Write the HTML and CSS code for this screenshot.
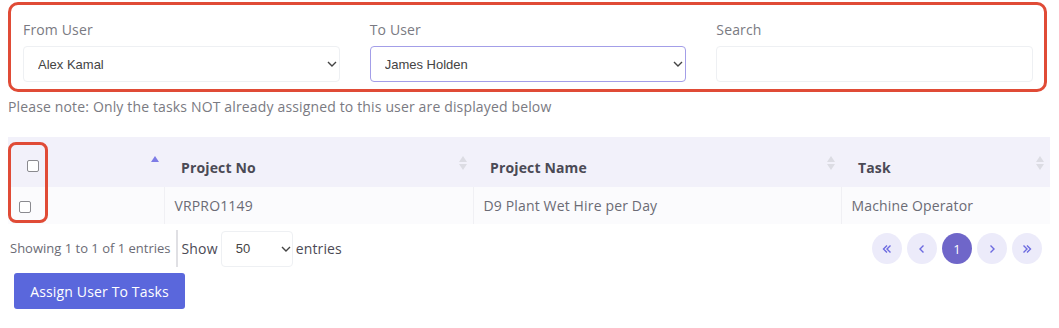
FILE: index.html
```html
<!DOCTYPE html>
<html>
<head>
<meta charset="utf-8">
<link rel="stylesheet" href="styles.css">
</head>
<body>
<div class="filters">
  <div class="field">
    <label class="lbl">From User</label>
    <div class="sel-wrap">
      <select class="sel"><option>Alex Kamal</option></select>
      <svg class="chev" width="10" height="6" viewBox="0 0 10 6"><polyline points="1,1 5,5 9,1" fill="none" stroke="#444" stroke-width="1.4"/></svg>
    </div>
  </div>
  <div class="field">
    <label class="lbl">To User</label>
    <div class="sel-wrap">
      <select class="sel focus"><option>James Holden</option></select>
      <svg class="chev" width="10" height="6" viewBox="0 0 10 6"><polyline points="1,1 5,5 9,1" fill="none" stroke="#444" stroke-width="1.4"/></svg>
    </div>
  </div>
  <div class="field">
    <label class="lbl">Search</label>
    <input class="inp" type="text">
  </div>
</div>
<p class="note">Please note: Only the tasks NOT already assigned to this user are displayed below</p>

<div class="table-wrap">
  <table class="tbl">
    <colgroup><col class="c1"><col class="c2"><col class="c3"><col class="c4"></colgroup>
    <thead>
      <tr>
        <th class="chk-h"><span class="cb"></span>
          <svg class="sort sort-up" width="8" height="6" viewBox="0 0 8 6"><polygon points="4,0 8,6 0,6" fill="#7e7ce6"/></svg>
        </th>
        <th>Project No
          <svg class="sort" width="8" height="14" viewBox="0 0 8 14"><polygon points="4,0 8,6 0,6" fill="#dcdce3"/><polygon points="0,8 8,8 4,14" fill="#dcdce3"/></svg>
        </th>
        <th>Project Name
          <svg class="sort" width="8" height="14" viewBox="0 0 8 14"><polygon points="4,0 8,6 0,6" fill="#dcdce3"/><polygon points="0,8 8,8 4,14" fill="#dcdce3"/></svg>
        </th>
        <th>Task
          <svg class="sort" width="8" height="14" viewBox="0 0 8 14"><polygon points="4,0 8,6 0,6" fill="#dcdce3"/><polygon points="0,8 8,8 4,14" fill="#dcdce3"/></svg>
        </th>
      </tr>
    </thead>
    <tbody>
      <tr>
        <td class="chk-d"><span class="cb"></span></td>
        <td>VRPRO1149</td>
        <td>D9 Plant Wet Hire per Day</td>
        <td>Machine Operator</td>
      </tr>
    </tbody>
  </table>
  <div class="mark"></div>
</div>

<div class="footer">
  <div class="info">Showing 1 to 1 of 1 entries</div>
  <div class="length">
    <span>Show</span>
    <div class="sel-wrap small">
      <select class="sel sel-sm"><option>50</option></select>
      <svg class="chev" width="10" height="6" viewBox="0 0 10 6"><polyline points="1,1 5,5 9,1" fill="none" stroke="#444" stroke-width="1.4"/></svg>
    </div>
    <span>entries</span>
  </div>
  <div class="pager">
    <span class="pg"><svg width="10" height="10" viewBox="0 0 10 10"><polyline points="5,1.5 1.5,5 5,8.5" fill="none" stroke="#6c6ae0" stroke-width="1.4"/><polyline points="8.5,1.5 5,5 8.5,8.5" fill="none" stroke="#6c6ae0" stroke-width="1.4"/></svg></span>
    <span class="pg"><svg width="10" height="10" viewBox="0 0 10 10"><polyline points="6.5,1.5 3,5 6.5,8.5" fill="none" stroke="#6c6ae0" stroke-width="1.4"/></svg></span>
    <span class="pg active">1</span>
    <span class="pg"><svg width="10" height="10" viewBox="0 0 10 10"><polyline points="3.5,1.5 7,5 3.5,8.5" fill="none" stroke="#6c6ae0" stroke-width="1.4"/></svg></span>
    <span class="pg"><svg width="10" height="10" viewBox="0 0 10 10"><polyline points="1.5,1.5 5,5 1.5,8.5" fill="none" stroke="#6c6ae0" stroke-width="1.4"/><polyline points="5,1.5 8.5,5 5,8.5" fill="none" stroke="#6c6ae0" stroke-width="1.4"/></svg></span>
  </div>
</div>

<button class="btn">Assign User To Tasks</button>
</body>
</html>
```

FILE: styles.css
```css
* { box-sizing: border-box; }
body {
  margin: 2px 8px 8px 8px;
  font-family: "Open Sans", "DejaVu Sans", sans-serif;
  letter-spacing: 0.15px;
  background: #fff;
  color: #6b6b75;
}
.filters {
  width: 1039px;
  border: 3px solid #e04b36;
  border-radius: 10px;
  padding: 15px 11px 7px 12px;
  display: grid;
  grid-template-columns: 1fr 1fr 1fr;
  column-gap: 30px;
}
.field { display: flex; flex-direction: column; }
.lbl {
  font-size: 14px;
  line-height: 20px;
  color: #7a7a82;
  margin-bottom: 6px;
}
.sel-wrap { position: relative; }
.sel {
  appearance: none;
  -webkit-appearance: none;
  width: 100%;
  height: 36px;
  border: 1px solid #eef0f3;
  border-radius: 4px;
  background: #fff;
  font-family: "Liberation Sans", Arial, sans-serif;
  font-size: 13px;
  letter-spacing: 0;
  color: #444;
  padding: 0 14px;
  outline: none;
}
.sel.focus { border-color: #a39ee8; }
.chev { position: absolute; right: 3px; top: 15px; pointer-events: none; }
.inp {
  height: 36px;
  border: 1px solid #eef0f3;
  border-radius: 4px;
  outline: none;
}
.note {
  margin: 5px 0 0 0;
  font-size: 14px;
  line-height: 20px;
  color: #7a7a82;
}
.table-wrap { position: relative; margin-top: 20px; width: 1042px; }
.tbl {
  width: 1042px;
  border-collapse: collapse;
  table-layout: fixed;
}
.c1 { width: 156px; }
.c2 { width: 309px; }
.c3 { width: 368px; }
.c4 { width: 209px; }
.tbl th {
  background: #f2f1fa;
  height: 50px;
  padding: 10px 20px 0 17px;
  text-align: left;
  font-size: 14px;
  font-weight: 700;
  color: #4b4a55;
  position: relative;
}
.tbl td {
  background: #fbfbfd;
  height: 37px;
  padding: 0 10px;
  font-size: 14px;
  color: #6b6b75;
  border-left: 1px solid #f0f0f4;
}
.tbl td:first-child { border-left: none; }
.sort { position: absolute; right: 6px; top: 19px; }
.sort-up { top: 19px; right: 5px; }
.cb {
  display: inline-block;
  width: 12px;
  height: 12px;
  border: 1px solid #8a8a8f;
  border-radius: 2px;
  background: #fff;
  vertical-align: middle;
}
.chk-h { padding-left: 19px !important; }
.chk-h .cb { margin-top: -6px; }
.chk-d { padding-left: 11px !important; }
.mark {
  position: absolute;
  left: 0;
  top: 5px;
  width: 40px;
  height: 81px;
  border: 3px solid #e04b36;
  border-radius: 8px;
}
.footer {
  display: flex;
  align-items: center;
  margin-top: 6px;
  width: 1042px;
}
.info {
  font-size: 13px;
  letter-spacing: 0;
  color: #6b6b75;
  padding: 0 5px 0 2px;
  line-height: 37px;
  border-right: 2px solid #e0e0e4;
}
.length {
  display: flex;
  align-items: center;
  gap: 3px;
  font-size: 14px;
  color: #4b4a55;
  margin-left: 4px;
}
.small { width: 72px; }
.sel-sm { padding: 0 14px; }
.small .chev { right: 2px; }
.pager { margin-left: auto; display: flex; gap: 5px; margin-right: 8px; }
.pg {
  width: 30px;
  height: 31px;
  border-radius: 50%;
  background: #ecebfa;
  display: flex;
  align-items: center;
  justify-content: center;
  font-size: 13px;
}
.pg.active { background: #6f66c9; color: #fff; }
.btn {
  margin: 6px 0 0 6px;
  width: 171px;
  height: 36px;
  background: #5a67dc;
  color: #fff;
  border: none;
  border-radius: 3px;
  font-family: "Open Sans", "DejaVu Sans", sans-serif;
  letter-spacing: 0.15px;
  font-size: 14px;
}
```
